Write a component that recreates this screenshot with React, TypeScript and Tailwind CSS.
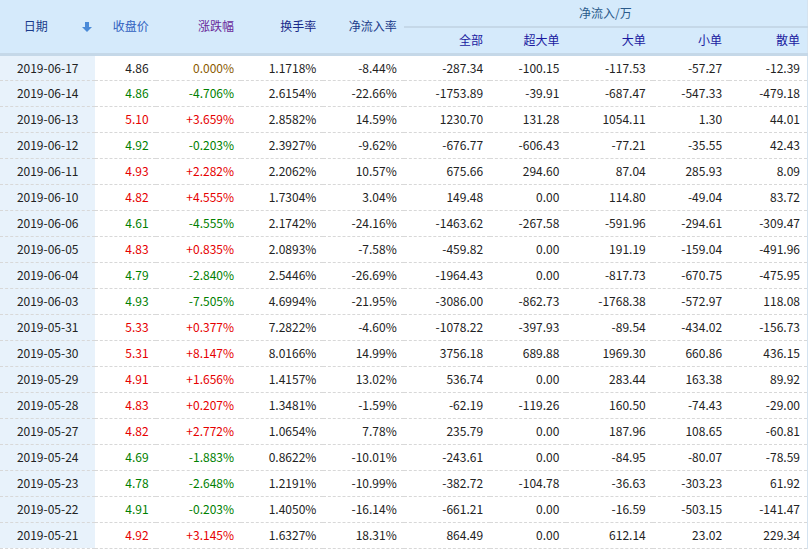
const rows: string[][] = [
["2019-06-17","4.86","0.000%","1.1718%","-8.44%","-287.34","-100.15","-117.53","-57.27","-12.39"],
["2019-06-14","4.86","-4.706%","2.6154%","-22.66%","-1753.89","-39.91","-687.47","-547.33","-479.18"],
["2019-06-13","5.10","+3.659%","2.8582%","14.59%","1230.70","131.28","1054.11","1.30","44.01"],
["2019-06-12","4.92","-0.203%","2.3927%","-9.62%","-676.77","-606.43","-77.21","-35.55","42.43"],
["2019-06-11","4.93","+2.282%","2.2062%","10.57%","675.66","294.60","87.04","285.93","8.09"],
["2019-06-10","4.82","+4.555%","1.7304%","3.04%","149.48","0.00","114.80","-49.04","83.72"],
["2019-06-06","4.61","-4.555%","2.1742%","-24.16%","-1463.62","-267.58","-591.96","-294.61","-309.47"],
["2019-06-05","4.83","+0.835%","2.0893%","-7.58%","-459.82","0.00","191.19","-159.04","-491.96"],
["2019-06-04","4.79","-2.840%","2.5446%","-26.69%","-1964.43","0.00","-817.73","-670.75","-475.95"],
["2019-06-03","4.93","-7.505%","4.6994%","-21.95%","-3086.00","-862.73","-1768.38","-572.97","118.08"],
["2019-05-31","5.33","+0.377%","7.2822%","-4.60%","-1078.22","-397.93","-89.54","-434.02","-156.73"],
["2019-05-30","5.31","+8.147%","8.0166%","14.99%","3756.18","689.88","1969.30","660.86","436.15"],
["2019-05-29","4.91","+1.656%","1.4157%","13.02%","536.74","0.00","283.44","163.38","89.92"],
["2019-05-28","4.83","+0.207%","1.3481%","-1.59%","-62.19","-119.26","160.50","-74.43","-29.00"],
["2019-05-27","4.82","+2.772%","1.0654%","7.78%","235.79","0.00","187.96","108.65","-60.81"],
["2019-05-24","4.69","-1.883%","0.8622%","-10.01%","-243.61","0.00","-84.95","-80.07","-78.59"],
["2019-05-23","4.78","-2.648%","1.2191%","-10.99%","-382.72","-104.78","-36.63","-303.23","61.92"],
["2019-05-22","4.91","-0.203%","1.4050%","-16.14%","-661.21","0.00","-16.59","-503.15","-141.47"],
["2019-05-21","4.92","+3.145%","1.6327%","18.31%","864.49","0.00","612.14","23.02","229.34"],
];
const widths = [95,60,85,82,80,86,76,86,76,78];
const colorOf = (c: string) => c.startsWith("+") ? "text-[#e60000]" : c.startsWith("-") ? "text-[#008000]" : "text-[#8a5a00]";
export default function App() {
  return (
    <div className="w-[811px] h-[551px] overflow-hidden bg-white" style={{fontFamily:'"Noto Sans CJK SC","Liberation Sans",sans-serif'}}>
      <table className="border-collapse text-[12px] table-fixed w-[808px] border-r border-[#d4e3f0]">
        <colgroup>{widths.map((w,i)=><col key={i} style={{width:w}}/>)}</colgroup>
        <thead className="bg-[#d5eafb]">
          <tr className="h-[27px]">
            <th rowSpan={2} className="font-normal text-[#1a3a8a] border-b-[3px] border-[#c5d8e8] relative">
              <span className="relative -left-[12px]">日期</span>
              <svg className="absolute right-[3px] top-[22px]" width="10" height="10" viewBox="0 0 10 10"><rect x="3" y="0" width="4" height="5" fill="#4a8ad8"/><path d="M0 5h10L5 10z" fill="#4a8ad8"/></svg>
            </th>
            <th rowSpan={2} className="font-normal text-[#3060c0] text-right pr-[7px] border-b-[3px] border-[#c5d8e8]">收盘价</th>
            <th rowSpan={2} className="font-normal text-[#6a2a9a] text-right pr-[7px] border-b-[3px] border-[#c5d8e8]">涨跌幅</th>
            <th rowSpan={2} className="font-normal text-[#1a2a8a] text-right pr-[7px] border-b-[3px] border-[#c5d8e8]">换手率</th>
            <th rowSpan={2} className="font-normal text-[#1a3a8a] text-right pr-[7px] border-b-[3px] border-[#c5d8e8]">净流入率</th>
            <th colSpan={5} className="font-normal text-[#2a5a8a] border-b-2 border-[#c5d8e8] align-middle">净流入/万</th>
          </tr>
          <tr className="h-[27px]">
            {["全部","超大单","大单","小单","散单"].map(t=><th key={t} className="font-normal text-[#1a1aa0] text-right pr-[7px] border-b-[3px] border-[#c5d8e8]">{t}</th>)}
          </tr>
        </thead>
        <tbody>
          {rows.map(r=>{
            const c = colorOf(r[2]);
            return (
              <tr key={r[0]} className="h-[26px] border-b border-dashed border-[#d8d8d8] text-[#222]">
                <td className="bg-[#e8f2fb] text-center">{r[0]}</td>
                <td className={`text-right pr-[7px] ${r[2]==="0.000%"?"text-[#222]":c}`}>{r[1]}</td>
                <td className={`text-right pr-[7px] ${c}`}>{r[2]}</td>
                {r.slice(3).map((v,i)=><td key={i} className="text-right pr-[7px]">{v}</td>)}
              </tr>
            );
          })}
        </tbody>
      </table>
    </div>
  );
}
